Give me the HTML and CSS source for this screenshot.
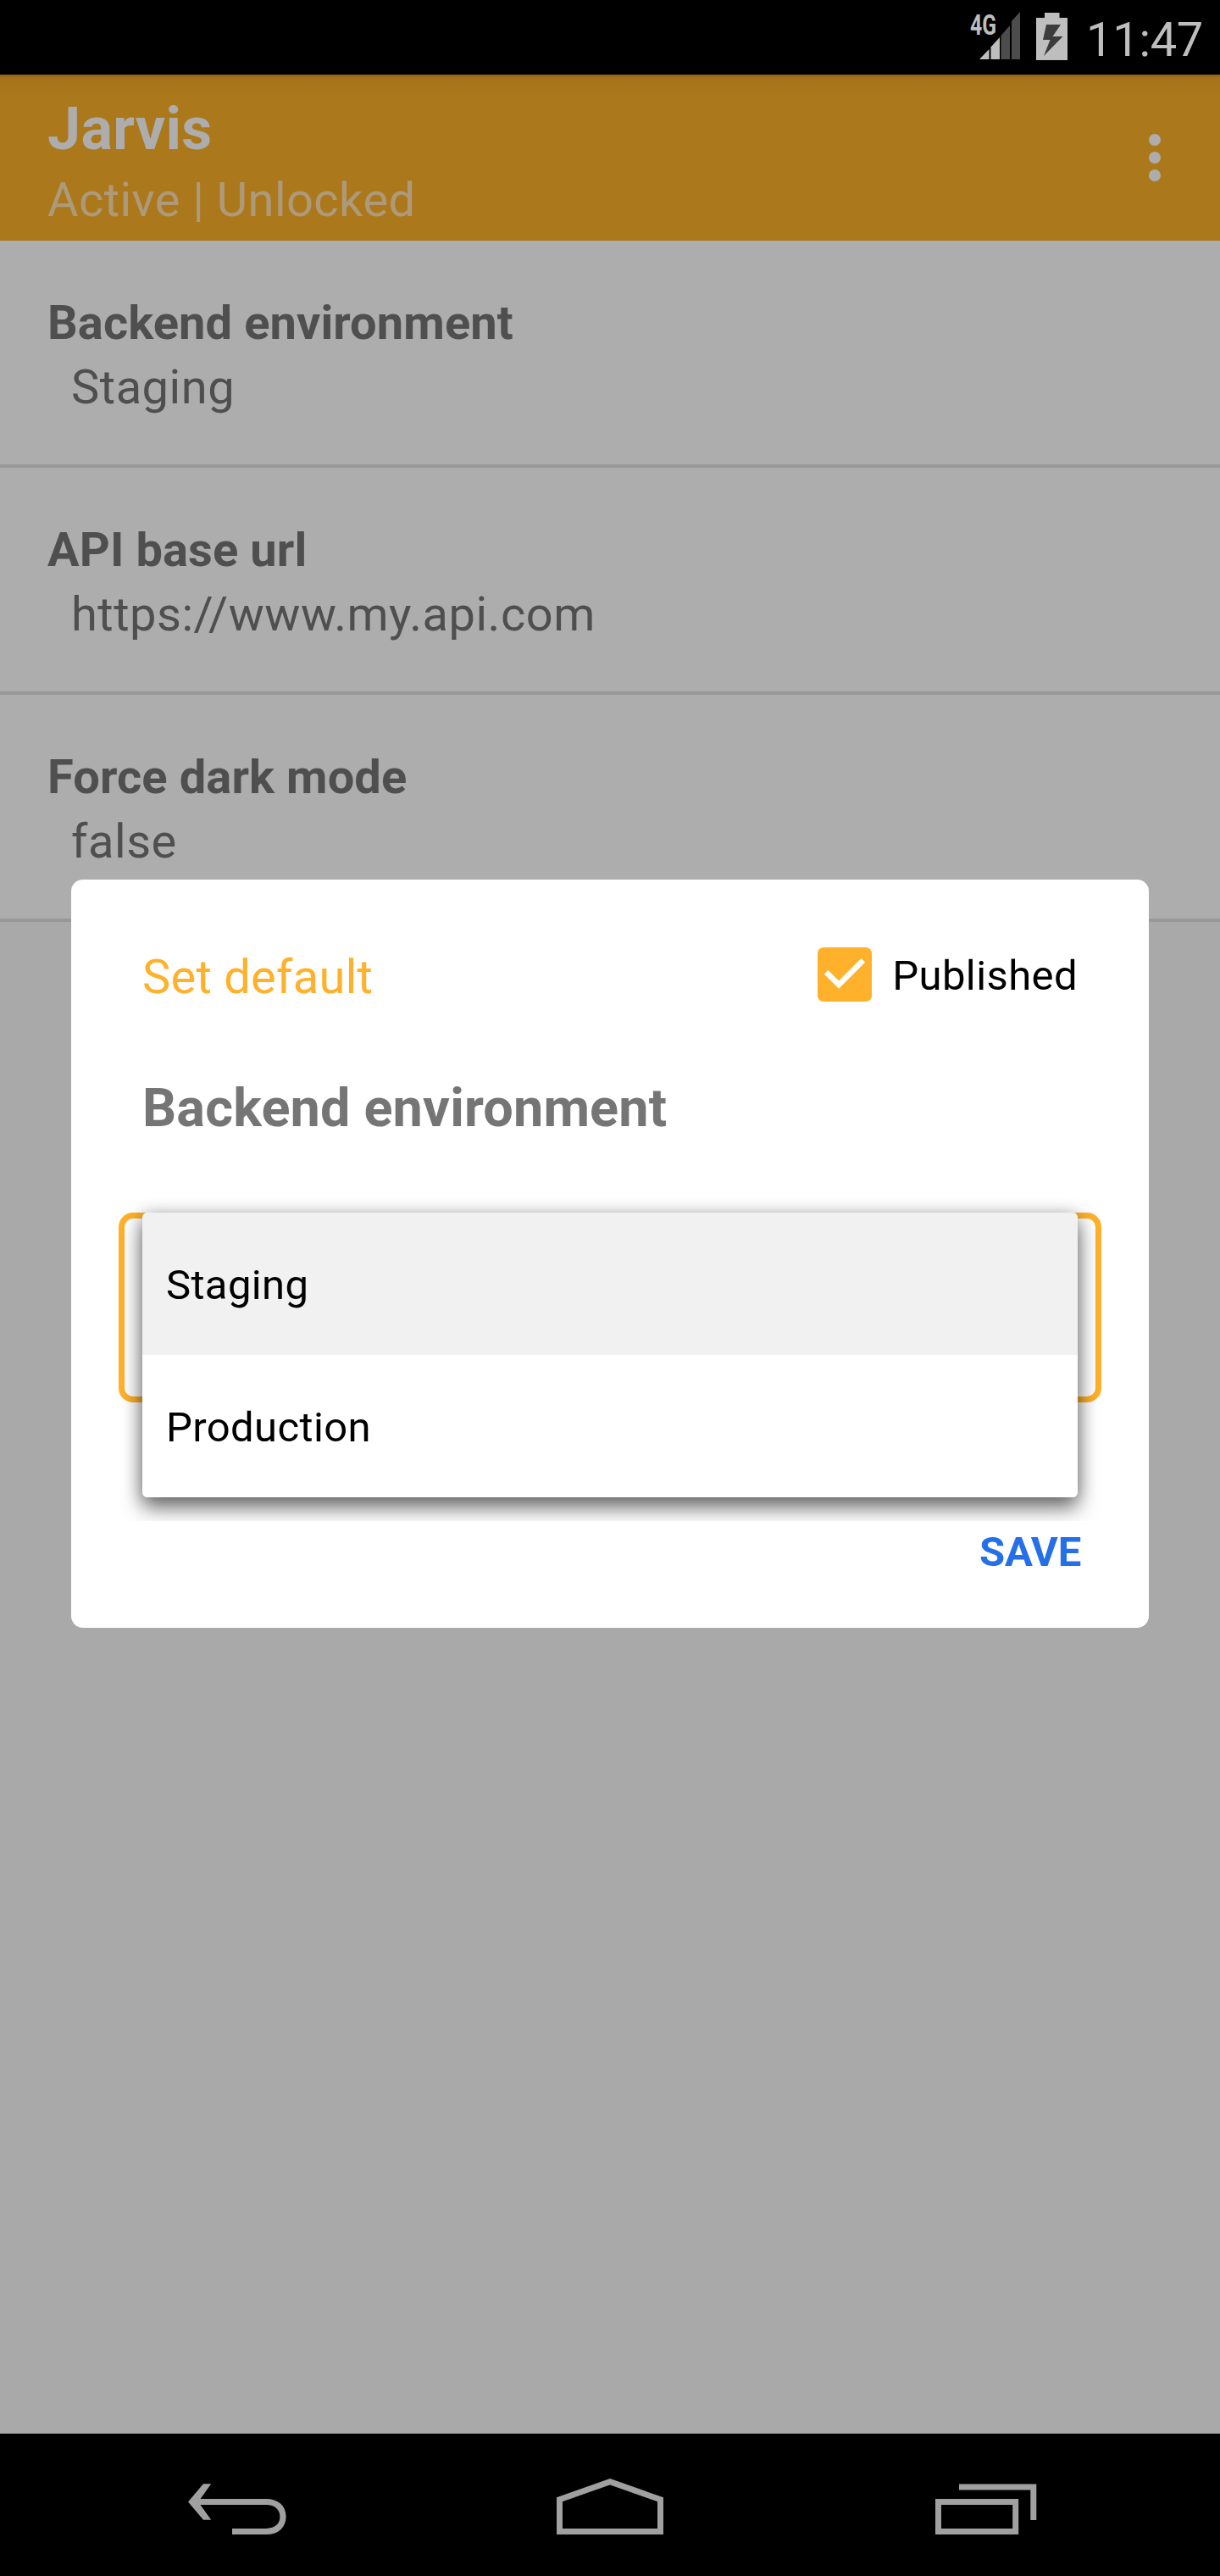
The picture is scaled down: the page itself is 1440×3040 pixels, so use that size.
FILE: index.html
```html
<!DOCTYPE html>
<html lang="en">
<head>
<meta charset="utf-8">
<title>Jarvis</title>
<link rel="stylesheet" href="styles.css">
</head>
<body>
<div class="screen">
  <header class="status-bar">
    <svg class="signal" width="64" height="70" viewBox="-4 -12 64 70">
      <text class="signal-label" x="0" y="28" textLength="31" lengthAdjust="spacingAndGlyphs">4G</text>
      <path d="M11 57L22.500 45V57Z" fill="#bebebe"/>
      <path d="M24.500 42.500L35 31V57H24.500Z" fill="#bebebe"/>
      <path d="M36.500 29L47 17V57H36.500Z" fill="#4c4c4c"/>
      <path d="M49 12L59 1V57H49Z" fill="#4c4c4c"/>
    </svg>
    <svg class="battery" width="37" height="56" viewBox="0 0 37 56">
      <path d="M10 0H27.500V6H37V56H0V6H10Z" fill="#bebebe"/>
      <path d="M12 14H29L19.500 28H31.500L9 51L16.500 32H8Z" fill="#3c3c3c"/>
    </svg>
    <span class="clock">11:47</span>
  </header>

  <div class="app-bar">
    <div>
      <h1 class="app-title">Jarvis</h1>
      <p class="app-subtitle">Active | Unlocked</p>
    </div>
    <svg class="overflow" width="14" height="56" viewBox="0 0 14 56" fill="#adadad">
      <circle cx="7" cy="7" r="7"/><circle cx="7" cy="28" r="7"/><circle cx="7" cy="49" r="7"/>
    </svg>
  </div>

  <main class="settings">
    <section class="setting"><h2 class="setting-name">Backend environment</h2><p class="setting-value">Staging</p></section>
    <section class="setting"><h2 class="setting-name">API base url</h2><p class="setting-value">https://www.my.api.com</p></section>
    <section class="setting"><h2 class="setting-name">Force dark mode</h2><p class="setting-value">false</p></section>
  </main>

  <nav class="nav-bar">
    <svg class="nav-icon" width="280" height="168" viewBox="0 0 280 168">
      <path d="M30 80.500H114C127 80.500 134 88 134 98C134 108 127 115.500 114 115.500H74" fill="none" stroke="#a0a0a0" stroke-width="7.200"/>
      <path d="M40 59.300H49.200L34 80.500L49.200 101.700H40L22 80.500Z" fill="#a0a0a0"/>
    </svg>
    <svg class="nav-icon" width="280" height="168" viewBox="0 0 280 168">
      <path d="M80.500 115.500V77.800L140 56.800L199.500 77.800V115.500Z" fill="none" stroke="#a0a0a0" stroke-width="7"/>
    </svg>
    <svg class="nav-icon" width="280" height="168" viewBox="0 0 280 168">
      <path d="M147.500 80.500H238.700V115.500H147.500Z" fill="none" stroke="#a0a0a0" stroke-width="7"/>
      <path d="M172 63H259.800V102" fill="none" stroke="#a0a0a0" stroke-width="7"/>
    </svg>
  </nav>

  <div class="dialog">
    <div class="dialog-top">
      <a class="set-default">Set default</a>
      <div class="published">
        <svg width="64" height="64" viewBox="0 0 64 64">
          <rect width="64" height="64" rx="7" fill="#ffb12b"/>
          <path d="M10.200 29.300L25 44.100L53.800 15.300" fill="none" stroke="#fff" stroke-width="6.500"/>
        </svg>
        <span class="published-label">Published</span>
      </div>
    </div>
    <h2 class="dialog-title">Backend environment</h2>
    <div class="field">
      <div class="menu">
        <div class="option option-selected">Staging</div>
        <div class="option">Production</div>
      </div>
    </div>
    <div class="actions"><a class="save">SAVE</a></div>
  </div>
</div>
</body>
</html>
```
FILE: styles.css
```css
* { box-sizing: border-box; margin: 0; padding: 0; }
body { width: 1440px; font-family: Roboto, sans-serif; font-weight: 400; }

.screen {
  position: relative;
  display: flex;
  flex-direction: column;
  width: 1440px;
  height: 3040px;
  overflow: hidden;
  background: #a9a9a9;
}

.status-bar {
  display: flex;
  justify-content: flex-end;
  align-items: flex-start;
  height: 88px;
  padding-right: 20px;
  background: #000;
  color: #bebebe;
}
.signal { margin: 1px 18px 0 0; overflow: visible; }
.signal-label { font: 700 34px "Roboto", sans-serif; fill: #bebebe; }
.battery { margin: 15px 22px 0 0; }
.clock { margin-top: 9px; font-size: 56px; line-height: 76px; letter-spacing: -.3px; }

.app-bar {
  display: flex;
  justify-content: space-between;
  align-items: flex-start;
  height: 196px;
  padding: 23px 70px 0 56px;
  background: linear-gradient(#8a6016 0, #a5731b 4px, #a8751b 12px, #ac781c 28px);
}
.app-title { font-size: 70px; line-height: 82px; letter-spacing: .3px; color: #adadad; }
.app-subtitle { margin-top: 5px; font-size: 56px; line-height: 76px; letter-spacing: .45px; color: #ad9a7a; }
.overflow { margin-top: 47px; }

.settings { flex: 1; color: #4f4f4f; }
.setting {
  height: 268px;
  padding: 59px 56px 0;
  background: #adadad;
  border-bottom: 4px solid #989898;
}
.setting-name { font-size: 56px; line-height: 76px; letter-spacing: .1px; }
.setting-value { padding-left: 28px; font-size: 56px; line-height: 76px; letter-spacing: .53px; }

.nav-bar {
  display: flex;
  justify-content: center;
  gap: 100px;
  height: 168px;
  background: #000;
}

.dialog {
  position: absolute;
  top: 1038px;
  left: 84px;
  width: 1272px;
  height: 883px;
  padding: 77px 56px 0;
  border-radius: 14px;
  background: #fff;
}
.dialog-top {
  display: flex;
  justify-content: space-between;
  padding: 0 28px;
  height: 76px;
}
.set-default { font-size: 56px; line-height: 76px; letter-spacing: .27px; color: #ffb12b; }
.published { display: flex; gap: 24px; padding-top: 3px; }
.published-label { font-size: 49px; line-height: 68px; letter-spacing: .4px; color: #000; }
.dialog-title { padding: 75px 28px 0; font-size: 63px; line-height: 84px; letter-spacing: .15px; color: #757575; }

.field {
  position: relative;
  height: 224px;
  margin-top: 81px;
  border: 7px solid #ffb12b;
  border-radius: 17px;
}
.menu {
  position: absolute;
  top: -7px;
  left: 21px;
  width: 1104px;
  border-radius: 6px;
  overflow: hidden;
  background: #fff;
}
.field::before {
  content: "";
  position: absolute;
  top: -7px;
  left: 21px;
  width: 1104px;
  height: 336px;
  border-radius: 6px;
  box-shadow: 0 13px 24px rgba(0, 0, 0, .5), 0 2px 20px rgba(0, 0, 0, .27);
  clip-path: inset(-28px);
}
.option { height: 168px; padding-left: 28px; font-size: 49px; line-height: 172px; letter-spacing: .37px; color: #000; }
.option-selected { background: #f1f1f1; }

.actions { display: flex; justify-content: flex-end; padding: 144px 24px 0 0; }
.save { font-size: 49px; line-height: 66px; font-weight: 700; letter-spacing: -.2px; color: #2570e8; }
```
